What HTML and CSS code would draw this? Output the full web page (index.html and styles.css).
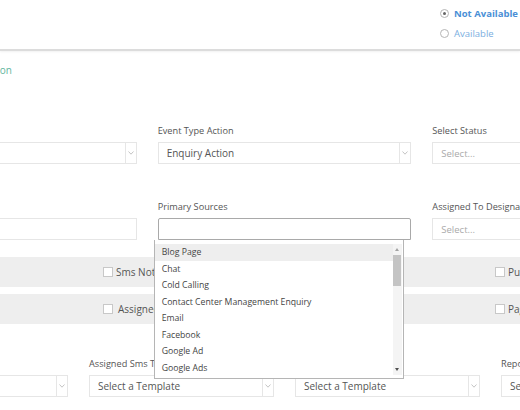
FILE: index.html
```html
<!DOCTYPE html>
<html lang="en">

<head>
    <meta charset="UTF-8">
    <meta name="viewport" content="width=device-width, initial-scale=1.0">
    <title>Event Configuration</title>
    <link rel="stylesheet" href="styles.css">
</head>

<body>
    <div class="topbar">
        <div class="status">
            <label class="radio checked"><span class="dot"></span>Not Available</label>
            <label class="radio"><span class="dot"></span>Available</label>
        </div>
    </div>

    <div class="tab-title"><span>Event Configuration</span></div>

    <div class="form">
        <div class="row cols-3">
            <div class="field">
                <label>Event Type</label>
                <div class="select">
                    <span class="value"></span>
                    <span class="arrow"><svg width="6" height="4" viewBox="0 0 6 4"><polyline points="0.5,0.5 3,3.2 5.5,0.5" /></svg></span>
                </div>
            </div>
            <div class="field">
                <label>Event Type Action</label>
                <div class="select">
                    <span class="value">Enquiry Action</span>
                    <span class="arrow"><svg width="6" height="4" viewBox="0 0 6 4"><polyline points="0.5,0.5 3,3.2 5.5,0.5" /></svg></span>
                </div>
            </div>
            <div class="field">
                <label>Select Status</label>
                <div class="select">
                    <span class="value placeholder">Select...</span>
                </div>
            </div>
        </div>

        <div class="row cols-3 second">
            <div class="field">
                <label>Name</label>
                <div class="input"></div>
            </div>
            <div class="field sources">
                <label>Primary Sources</label>
                <div class="input open"></div>
                <div class="dropdown">
                    <ul class="options">
                        <li class="active">Blog Page</li>
                        <li>Chat</li>
                        <li>Cold Calling</li>
                        <li>Contact Center Management Enquiry</li>
                        <li>Email</li>
                        <li>Facebook</li>
                        <li>Google Ad</li>
                        <li>Google Ads</li>
                    </ul>
                    <div class="scrollbar">
                        <span class="up"></span>
                        <span class="thumb"></span>
                        <span class="down"></span>
                    </div>
                </div>
            </div>
            <div class="field">
                <label>Assigned To Designation</label>
                <div class="select">
                    <span class="value placeholder">Select...</span>
                </div>
            </div>
        </div>

        <div class="band">
            <span></span>
            <label class="check"><span class="box"></span>Sms Notification</label>
            <label class="check"><span class="box"></span>Push Notification</label>
        </div>
        <div class="band">
            <span></span>
            <label class="check wide"><span class="box"></span>Assigned To Notification</label>
            <label class="check"><span class="box"></span>Page Notification</label>
        </div>

        <div class="row cols-4 third">
            <div class="field">
                <label>Template</label>
                <div class="select">
                    <span class="value"></span>
                    <span class="arrow"><svg width="6" height="4" viewBox="0 0 6 4"><polyline points="0.5,0.5 3,3.2 5.5,0.5" /></svg></span>
                </div>
            </div>
            <div class="field">
                <label>Assigned Sms Template</label>
                <div class="select">
                    <span class="value">Select a Template</span>
                    <span class="arrow"><svg width="6" height="4" viewBox="0 0 6 4"><polyline points="0.5,0.5 3,3.2 5.5,0.5" /></svg></span>
                </div>
            </div>
            <div class="field">
                <label>Assigned Email Template</label>
                <div class="select">
                    <span class="value">Select a Template</span>
                    <span class="arrow"><svg width="6" height="4" viewBox="0 0 6 4"><polyline points="0.5,0.5 3,3.2 5.5,0.5" /></svg></span>
                </div>
            </div>
            <div class="field">
                <label>Report Template</label>
                <div class="select">
                    <span class="value">Select a Template</span>
                </div>
            </div>
        </div>
    </div>
</body>

</html>
```

FILE: styles.css
```css
* {
    margin: 0px;
    padding: 0px;
    box-sizing: border-box;
}

body {
    font-family: "Open Sans", "Liberation Sans", sans-serif;
    font-size: 9.5px;
    color: #555;
    background: #fff;
    overflow: hidden;
    width: 520px;
    height: 410px;
}

.topbar {
    height: 51px;
    border-bottom: 2px solid #dcdcdc;
    box-shadow: 0 1px 2px rgba(0, 0, 0, 0.06);
    display: flex;
    justify-content: flex-end;
}

.status {
    width: 80px;
    padding-top: 3px;
    display: flex;
    flex-direction: column;
}

.radio {
    display: flex;
    align-items: center;
    height: 20px;
    color: #7aaee0;
    font-size: 9.5px;
    white-space: nowrap;
}

.radio .dot {
    width: 9px;
    height: 9px;
    border: 1px solid #b5b5b5;
    border-radius: 50%;
    margin-right: 5px;
    display: flex;
    align-items: center;
    justify-content: center;
}

.radio.checked {
    color: #4a8fd6;
    font-weight: bold;
}

.radio.checked .dot::after {
    content: "";
    width: 3px;
    height: 3px;
    border-radius: 50%;
    background: #666;
}

.tab-title {
    width: 12px;
    margin-top: 12px;
    height: 14px;
    line-height: 14px;
    display: flex;
    justify-content: flex-end;
    overflow: hidden;
    white-space: nowrap;
    color: #62b59e;
    font-size: 10px;
}

.form {
    width: 803px;
    margin-left: -117px;
    margin-top: 47px;
}

.row {
    display: grid;
    column-gap: 21px;
}

.cols-3 {
    grid-template-columns: repeat(3, 1fr);
}

.cols-4 {
    grid-template-columns: repeat(4, 1fr);
}

.row.second {
    margin-top: 36px;
}

.row.third {
    margin-top: 33px;
}

.field {
    position: relative;
}

.field label {
    display: block;
    height: 14px;
    line-height: 14px;
    margin-bottom: 4px;
    white-space: nowrap;
    color: #555;
    font-size: 9.2px;
}

.select,
.input {
    height: 22px;
    border: 1px solid #e6e6e6;
    background: #fff;
    display: flex;
    align-items: center;
}

.input.open {
    border-color: #a9a9a9;
    border-radius: 2px 2px 0 0;
}

.select .value {
    flex: 1;
    padding-left: 8px;
    color: #555;
    font-size: 10px;
    white-space: nowrap;
}

.select .value.placeholder {
    color: #aaa;
    font-size: 9.5px;
}

.select .arrow {
    width: 11px;
    height: 100%;
    border-left: 1px solid #e6e6e6;
    display: flex;
    align-items: center;
    justify-content: center;
}

.select .arrow polyline {
    fill: none;
    stroke: #b5b5b5;
    stroke-width: 0.8;
}

.dropdown {
    position: absolute;
    left: -4px;
    top: 40px;
    width: 250px;
    height: 139px;
    border: 1px solid #b5b5b5;
    border-top: none;
    background: #fff;
    z-index: 10;
    display: flex;
    padding: 4px 0 3px 0;
}

.options {
    flex: 1;
    list-style: none;
}

.options li {
    height: 16.5px;
    line-height: 16.5px;
    padding-left: 7px;
    color: #444;
    font-size: 8.7px;
    white-space: nowrap;
}

.options li.active {
    background: #eeeeee;
}

.scrollbar {
    width: 9px;
    margin-right: 1px;
    background: #f4f4f4;
    display: flex;
    flex-direction: column;
    align-items: center;
}

.scrollbar .up,
.scrollbar .down {
    height: 11px;
    width: 100%;
    display: flex;
    align-items: center;
    justify-content: center;
}

.scrollbar .up::after {
    content: "";
    border-left: 2.5px solid transparent;
    border-right: 2.5px solid transparent;
    border-bottom: 3px solid #a3a3a3;
}

.scrollbar .down::after {
    content: "";
    border-left: 2.5px solid transparent;
    border-right: 2.5px solid transparent;
    border-top: 3px solid #505050;
}

.scrollbar .thumb {
    width: 8px;
    height: 31px;
    background: #c4c4c4;
    margin-bottom: auto;
}

.band {
    height: 30px;
    background: #eeeeee;
    display: grid;
    grid-template-columns: 220px 392px 1fr;
    align-items: center;
    margin-top: 7px;
}

.row.second + .band {
    margin-top: 17px;
}

.check {
    display: flex;
    align-items: center;
    white-space: nowrap;
    color: #555;
    font-size: 10px;
}

.check .box {
    width: 10px;
    height: 10px;
    border: 1px solid #c8c8c8;
    background: #fff;
    margin-right: 3px;
}

.check.wide .box {
    margin-right: 5px;
}
```
